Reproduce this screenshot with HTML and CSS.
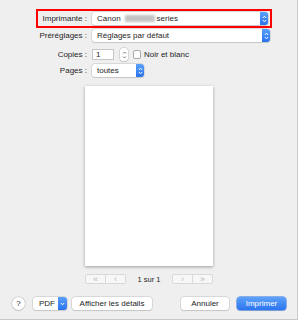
FILE: index.html
```html
<!DOCTYPE html>
<html lang="fr">
<head>
<meta charset="UTF-8">
<meta name="viewport" content="width=device-width, initial-scale=1.0">
<title>Imprimer</title>
<link rel="stylesheet" href="styles.css">
</head>
<body>
<div class="dialog">
 <!-- Réglages -->
 <div class="form">
  <div class="highlight"></div>
  <div class="row row-printer">
   <span class="lbl">Imprimante :</span>
   <div class="popup popup-printer">
    <span class="val">Canon</span>
    <span class="blur"></span>
    <span class="val">series</span>
    <span class="arrows"><svg width="5" height="8" viewBox="0 0 5 8"><path d="M0.8 3 L2.5 1.2 L4.2 3 M0.8 5 L2.5 6.8 L4.2 5" fill="none" stroke="#fff" stroke-width="1"/></svg></span>
   </div>
  </div>
  <div class="row row-preset">
   <span class="lbl">Préréglages :</span>
   <div class="popup popup-preset">
    <span class="val">Réglages par défaut</span>
    <span class="arrows"><svg width="5" height="8" viewBox="0 0 5 8"><path d="M0.8 3 L2.5 1.2 L4.2 3 M0.8 5 L2.5 6.8 L4.2 5" fill="none" stroke="#fff" stroke-width="1"/></svg></span>
   </div>
  </div>
  <div class="row row-copies">
   <span class="lbl">Copies :</span>
   <div class="field">1</div>
   <div class="stepper"><svg width="5" height="10" viewBox="0 0 5 10"><path d="M1 3.5 L2.5 2 L4 3.5 M1 6.5 L2.5 8 L4 6.5" fill="none" stroke="#555" stroke-width="0.8"/></svg></div>
   <span class="check"></span>
   <span class="check-text">Noir et blanc</span>
  </div>
  <div class="row row-pages">
   <span class="lbl">Pages :</span>
   <div class="popup popup-pages">
    <span class="val">toutes</span>
    <span class="arrows"><svg width="5" height="8" viewBox="0 0 5 8"><path d="M0.8 3 L2.5 1.2 L4.2 3 M0.8 5 L2.5 6.8 L4.2 5" fill="none" stroke="#fff" stroke-width="1"/></svg></span>
   </div>
  </div>
 </div>

 <!-- Aperçu -->
 <div class="preview">
  <div class="paper"></div>
  <div class="pager">
   <div class="seg">
    <span class="seg-btn">&laquo;</span>
    <span class="seg-btn">&lsaquo;</span>
   </div>
   <span class="count">1 sur 1</span>
   <div class="seg">
    <span class="seg-btn">&rsaquo;</span>
    <span class="seg-btn">&raquo;</span>
   </div>
  </div>
 </div>

 <!-- Boutons -->
 <div class="footer">
  <span class="help">?</span>
  <div class="btn btn-pdf">
   <span class="pdf-text">PDF</span>
   <span class="arrows arrows-down"><svg width="5" height="4" viewBox="0 0 5 4"><path d="M0.8 1 L2.5 2.8 L4.2 1" fill="none" stroke="#fff" stroke-width="1"/></svg></span>
  </div>
  <div class="btn btn-details">Afficher les détails</div>
  <div class="spacer"></div>
  <div class="btn btn-cancel">Annuler</div>
  <div class="btn btn-print">Imprimer</div>
 </div>
</div>
</body>
</html>
```

FILE: styles.css
```css
body {
 margin: 0;
 font-family: "Liberation Sans", Arial, sans-serif;
 font-size: 8px;
 color: #1e1e1e;
 background-color: #fff;
}
.dialog {
 width: 297px;
 height: 319px;
 background-color: #efefef;
 border-right: 1px solid #c9c9c9;
 border-bottom: 1px solid #c9c9c9;
 display: flex;
 flex-direction: column;
}
.form {
 position: relative;
 padding-top: 12px;
}
.highlight {
 position: absolute;
 left: 36px;
 top: 9px;
 width: 232px;
 height: 15px;
 border: 2px solid #ff0000;
}
.row {
 display: flex;
 align-items: center;
 height: 13px;
}
.row-preset {
 margin-top: 4px;
}
.row-copies {
 margin-top: 6px;
 height: 13px;
}
.row-pages {
 margin-top: 3px;
}
.lbl {
 width: 87px;
 text-align: right;
 margin-right: 5px;
 flex-shrink: 0;
}
.popup {
 display: flex;
 align-items: center;
 height: 13px;
 box-sizing: border-box;
 background-color: #fff;
 border-radius: 3px;
 box-shadow: 0 0 0 0.5px #c2c2c2, 0 1px 1px rgba(0, 0, 0, 0.15);
 padding-left: 5px;
}
.popup-printer {
 width: 176px;
}
.popup-preset {
 width: 178px;
}
.popup-pages {
 width: 52px;
}
.val {
 white-space: nowrap;
}
.blur {
 display: inline-block;
 width: 30px;
 height: 7px;
 margin: 0 2px 0 4px;
 background-color: #c4c4c4;
 filter: blur(1.2px);
}
.arrows {
 margin-left: auto;
 width: 8px;
 height: 13px;
 background: linear-gradient(#5aa0f9, #2a72ee);
 border-radius: 0 3px 3px 0;
 display: flex;
 align-items: center;
 justify-content: center;
}
.field {
 width: 22px;
 height: 11px;
 box-sizing: border-box;
 background-color: #fff;
 border: 1px solid #c6c6c6;
 padding-left: 3px;
 line-height: 9px;
}
.stepper {
 margin-left: 6px;
 width: 8px;
 height: 13px;
 box-sizing: border-box;
 background-color: #fff;
 border-radius: 3px;
 box-shadow: 0 0 0 0.5px #bdbdbd, 0 1px 1px rgba(0, 0, 0, 0.12);
 display: flex;
 align-items: center;
 justify-content: center;
}
.check {
 margin-left: 5px;
 width: 8px;
 height: 9px;
 box-sizing: border-box;
 background-color: #fff;
 border: 1px solid #a9a9a9;
 border-radius: 2px;
}
.check-text {
 margin-left: 3px;
}
.preview {
 margin-top: 9px;
 display: flex;
 flex-direction: column;
 align-items: center;
 padding-left: 1px;
}
.paper {
 width: 128px;
 height: 180px;
 background-color: #fff;
 box-shadow: 0 1px 3px rgba(0, 0, 0, 0.35);
}
.pager {
 margin-top: 8px;
 width: 128px;
 height: 10px;
 display: flex;
 align-items: center;
 justify-content: space-between;
}
.seg {
 display: flex;
 height: 10px;
 box-sizing: border-box;
 border: 1px solid #d9d9d9;
 border-radius: 2px;
 background-color: #f7f7f7;
}
.seg-btn {
 width: 19px;
 text-align: center;
 color: #b8b8b8;
 font-size: 9px;
 line-height: 8px;
}
.seg-btn + .seg-btn {
 border-left: 1px solid #d9d9d9;
}
.count {
 font-size: 7.5px;
}
.footer {
 margin-top: 13px;
 display: flex;
 align-items: center;
 padding: 0 11px 0 12px;
}
.help {
 width: 13px;
 height: 13px;
 box-sizing: border-box;
 border-radius: 50%;
 background-color: #fff;
 box-shadow: 0 0 0 0.5px #bdbdbd, 0 1px 1px rgba(0, 0, 0, 0.15);
 text-align: center;
 line-height: 13px;
 font-size: 8px;
 margin-right: 8px;
}
.btn {
 height: 13px;
 box-sizing: border-box;
 background-color: #fff;
 border-radius: 3px;
 box-shadow: 0 0 0 0.5px #c2c2c2, 0 1px 1px rgba(0, 0, 0, 0.15);
 display: flex;
 align-items: center;
 justify-content: center;
 white-space: nowrap;
}
.btn-pdf {
 width: 34px;
 justify-content: flex-start;
}
.pdf-text {
 margin-left: 6px;
}
.arrows-down {
 width: 9px;
}
.btn-details {
 margin-left: 5px;
 width: 80px;
}
.spacer {
 flex: 1;
}
.btn-cancel {
 width: 48px;
}
.btn-print {
 margin-left: 8px;
 width: 49px;
 color: #fff;
 background: linear-gradient(#5ea2fa, #2c74ef);
 box-shadow: 0 0 0 0.5px #2a6fe0, 0 1px 1px rgba(0, 0, 0, 0.15);
}
```
